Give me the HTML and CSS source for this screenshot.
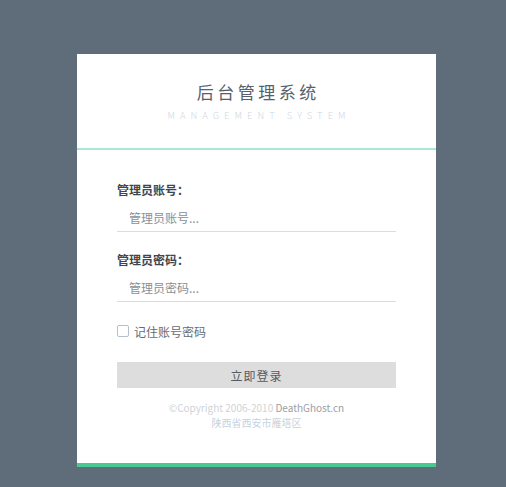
FILE: index.html
```html
<!DOCTYPE html>
<html lang="zh-CN">
<head>
<meta charset="utf-8">
<title>后台管理系统</title>
<link rel="stylesheet" href="styles.css">
</head>
<body>
<div class="card">
  <div class="card-head">
    <h1 class="title">后台管理系统</h1>
    <p class="subtitle">MANAGEMENT SYSTEM</p>
  </div>
  <form class="card-body">
    <div class="field">
      <label class="field-label">管理员账号：</label>
      <input class="field-input" type="text" placeholder="管理员账号...">
    </div>
    <div class="field field-second">
      <label class="field-label">管理员密码：</label>
      <input class="field-input" type="password" placeholder="管理员密码...">
    </div>
    <label class="remember">
      <span class="checkbox"></span>
      <span class="remember-text">记住账号密码</span>
    </label>
    <button class="submit" type="button">立即登录</button>
    <div class="footer">
      <p class="copy">©Copyright 2006-2010 <span class="brand">DeathGhost.cn</span></p>
      <p class="addr">陕西省西安市雁塔区</p>
    </div>
  </form>
</div>
</body>
</html>
```

FILE: styles.css
```css
html, body {
  margin: 0;
  padding: 0;
}
body {
  background: #5f6d7a;
  font-family: "Noto Sans CJK SC", "Noto Sans", sans-serif;
  height: 487px;
  overflow: hidden;
}
.card {
  width: 359px;
  margin: 54px 0 0 77px;
  background: #fff;
  border-bottom: 4px solid #48c994;
}
.card-head {
  height: 94px;
  border-bottom: 2px solid #a6ead3;
  text-align: center;
  display: flex;
  flex-direction: column;
  align-items: center;
}
.title {
  margin: 26px 0 0 0;
  font-size: 17px;
  font-weight: 400;
  line-height: 24px;
  letter-spacing: 3.5px;
  padding-left: 3.5px;
  color: #56616d;
}
.subtitle {
  margin: 4px 0 0 0;
  font-size: 9.5px;
  line-height: 14px;
  letter-spacing: 5px;
  padding-left: 5px;
  color: #d0d7df;
  font-weight: 300;
}
.card-body {
  padding: 30px 40px 33px 40px;
  display: flex;
  flex-direction: column;
}
.field {
  display: flex;
  flex-direction: column;
}
.field-second {
  margin-top: 18px;
}
.field-label {
  font-size: 12px;
  line-height: 20px;
  font-weight: 700;
  color: #3e4650;
}
.field-input {
  margin-top: 4px;
  height: 28px;
  box-sizing: border-box;
  border: 0;
  border-bottom: 1px solid #dcdcdc;
  padding: 0 0 0 12px;
  font-family: inherit;
  font-size: 12px;
  color: #333;
  outline: none;
  background: transparent;
}
.field-input::placeholder {
  color: #8a8f95;
}
.remember {
  margin-top: 19px;
  height: 20px;
  display: flex;
  align-items: center;
  gap: 5px;
}
.checkbox {
  width: 12px;
  height: 12px;
  box-sizing: border-box;
  border: 1px solid #b7c0ca;
  border-radius: 2px;
  background: #fff;
}
.remember-text {
  font-size: 12px;
  color: #666c73;
}
.submit {
  margin-top: 21px;
  height: 26px;
  border: 0;
  background: #dddddd;
  font-family: inherit;
  font-size: 12px;
  letter-spacing: 1px;
  color: #555b62;
  padding: 0;
}
.footer {
  margin-top: 12px;
  text-align: center;
  font-size: 10px;
  line-height: 15px;
}
.footer p {
  margin: 0;
}
.copy {
  color: #cfd3d7;
}
.brand {
  color: #9aa0a6;
}
.addr {
  color: #c6d3e0;
}
```
